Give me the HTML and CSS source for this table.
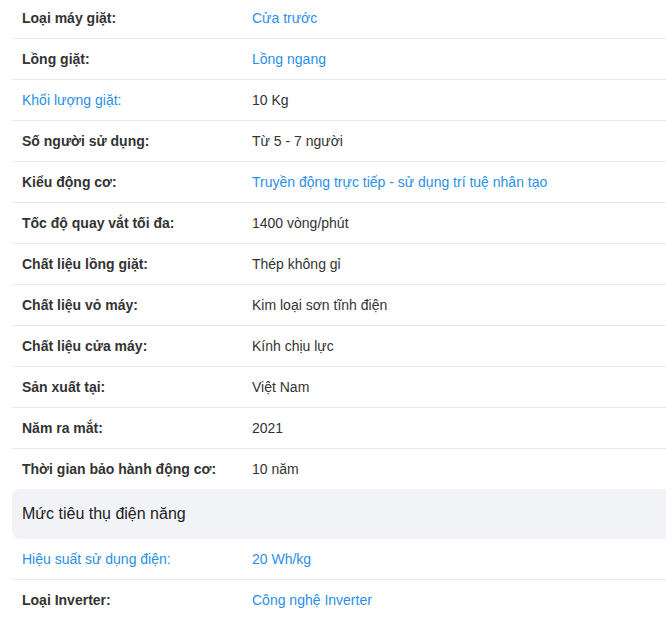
FILE: index.html
```html
<!DOCTYPE html>
<html lang="vi">
<head>
<meta charset="utf-8">
<link rel="stylesheet" href="styles.css">
</head>
<body>
<div class="specs">
  <ul class="list">
    <li class="row"><span class="label">Loại máy giặt:</span><a class="value link">Cửa trước</a></li>
    <li class="row"><span class="label">Lồng giặt:</span><a class="value link">Lồng ngang</a></li>
    <li class="row"><a class="label link plain">Khối lượng giặt:</a><span class="value">10 Kg</span></li>
    <li class="row"><span class="label">Số người sử dụng:</span><span class="value">Từ 5 - 7 người</span></li>
    <li class="row"><span class="label">Kiểu động cơ:</span><a class="value link">Truyền động trực tiếp - sử dụng trí tuệ nhân tạo</a></li>
    <li class="row"><span class="label">Tốc độ quay vắt tối đa:</span><span class="value">1400 vòng/phút</span></li>
    <li class="row"><span class="label">Chất liệu lồng giặt:</span><span class="value">Thép không gỉ</span></li>
    <li class="row"><span class="label">Chất liệu vỏ máy:</span><span class="value">Kim loại sơn tĩnh điện</span></li>
    <li class="row"><span class="label">Chất liệu cửa máy:</span><span class="value">Kính chịu lực</span></li>
    <li class="row"><span class="label">Sản xuất tại:</span><span class="value">Việt Nam</span></li>
    <li class="row"><span class="label">Năm ra mắt:</span><span class="value">2021</span></li>
    <li class="row last"><span class="label">Thời gian bảo hành động cơ:</span><span class="value">10 năm</span></li>
  </ul>
  <h3 class="group">Mức tiêu thụ điện năng</h3>
  <ul class="list">
    <li class="row"><a class="label link plain">Hiệu suất sử dụng điện:</a><a class="value link">20 Wh/kg</a></li>
    <li class="row last"><span class="label">Loại Inverter:</span><a class="value link">Công nghệ Inverter</a></li>
  </ul>
</div>
</body>
</html>
```
FILE: styles.css
```css
html, body {
  margin: 0;
  padding: 0;
  background: #fff;
  overflow: hidden;
}
body {
  font-family: "Liberation Sans", Arial, sans-serif;
  font-size: 14px;
  color: #333;
}
.specs {
  margin: -2px 0 0 12px;
}
.list {
  list-style: none;
  margin: 0;
  padding: 0;
}
.row {
  display: flex;
  align-items: center;
  height: 40px;
  border-bottom: 1px solid #e9e9e9;
}
.row.last {
  border-bottom: none;
}
.label {
  width: 230px;
  padding-left: 10px;
  font-weight: bold;
  color: #333;
}
.label.plain {
  font-weight: normal;
}
.value {
  color: #333;
}
.link {
  color: #2a8fe8;
  text-decoration: none;
}
.group {
  margin: 0;
  height: 50px;
  display: flex;
  align-items: center;
  padding-left: 10px;
  background: #f2f3f6;
  border-radius: 8px 0 0 8px;
  font-size: 16px;
  font-weight: normal;
  color: #222;
}
```
